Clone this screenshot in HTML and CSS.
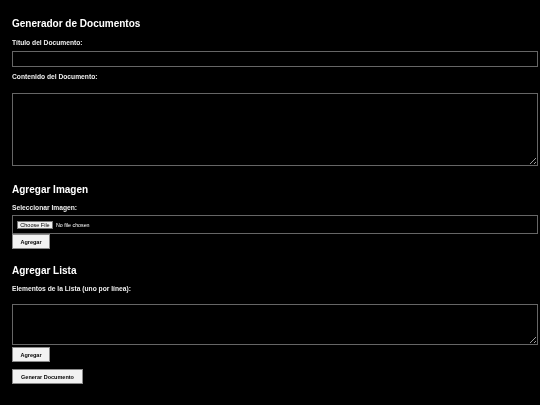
FILE: index.html
```html
<!DOCTYPE html>
<html lang="es">
<head>
<meta charset="utf-8">
<title>Generador de Documentos</title>
<link rel="stylesheet" href="styles.css">
</head>
<body>
<main class="page">
  <h2 class="title first">Generador de Documentos</h2>
  <label class="label l1" for="titulo">Título del Documento:</label>
  <input class="field" id="titulo" type="text">
  <label class="label l2" for="contenido">Contenido del Documento:</label>
  <textarea class="area area-main" id="contenido"></textarea>

  <h2 class="title t2">Agregar Imagen</h2>
  <label class="label l3" for="imagen">Seleccionar Imagen:</label>
  <div class="filebox">
    <span class="filebtn">Choose File</span>
    <span class="filetext">No file chosen</span>
  </div>
  <button class="btn">Agregar</button>

  <h2 class="title t3">Agregar Lista</h2>
  <label class="label l4" for="lista">Elementos de la Lista (uno por línea):</label>
  <textarea class="area area-list" id="lista"></textarea>
  <button class="btn btn-list">Agregar</button>
  <button class="btn btn-gen">Generar Documento</button>
</main>
</body>
</html>
```

FILE: styles.css
```css
html, body {
  margin: 0;
  padding: 0;
  background: #000;
  color: #fff;
  font-family: "Liberation Sans", Arial, sans-serif;
}
.page {
  display: flex;
  flex-direction: column;
  align-items: flex-start;
  padding: 0 2px 0 12px;
  will-change: transform;
}
.title {
  font-size: 10px;
  font-weight: bold;
  margin: 0;
  line-height: 12px;
}
.title.first { margin-top: 18px; }
.title.t2 { margin-top: 18px; }
.title.t3 { margin-top: 16px; }
.label {
  font-size: 6.7px;
  font-weight: bold;
  line-height: 8px;
  color: #eee;
}
.l1 { margin-top: 9px; }
.l2 { margin-top: 6px; }
.l3 { margin-top: 8px; }
.l4 { margin-top: 8px; }
.field {
  box-sizing: border-box;
  align-self: stretch;
  height: 16px;
  margin: 4px 0 0 0;
  background: #000;
  border: 1px solid #666;
  padding: 0;
}
.area {
  box-sizing: border-box;
  align-self: stretch;
  margin: 0;
  background: #000;
  border: 1px solid #666;
  padding: 0;
  resize: vertical;
}
.area-main {
  height: 73px;
  margin-top: 12px;
}
.area-list {
  height: 41px;
  margin-top: 11px;
}
.filebox {
  box-sizing: border-box;
  align-self: stretch;
  height: 19px;
  margin-top: 3px;
  border: 1px solid #666;
  display: flex;
  align-items: center;
  padding-left: 4px;
  gap: 3px;
}
.filebtn {
  box-sizing: border-box;
  background: #efefef;
  color: #000;
  border: 1px solid #767676;
  font-size: 5.5px;
  line-height: 6px;
  height: 8px;
  width: 36px;
  text-align: center;
}
.filetext {
  font-size: 5.3px;
  color: #fff;
}
.btn {
  box-sizing: border-box;
  font-family: "Liberation Sans", Arial, sans-serif;
  background: #f2f2f2;
  color: #000;
  border: 1px solid #8a8a8a;
  font-size: 5.5px;
  font-weight: bold;
  height: 15px;
  width: 38px;
  padding: 0;
  margin: 0;
}
.btn-list { margin-top: 2px; }
.btn-gen {
  width: 71px;
  margin-top: 7px;
}
```
